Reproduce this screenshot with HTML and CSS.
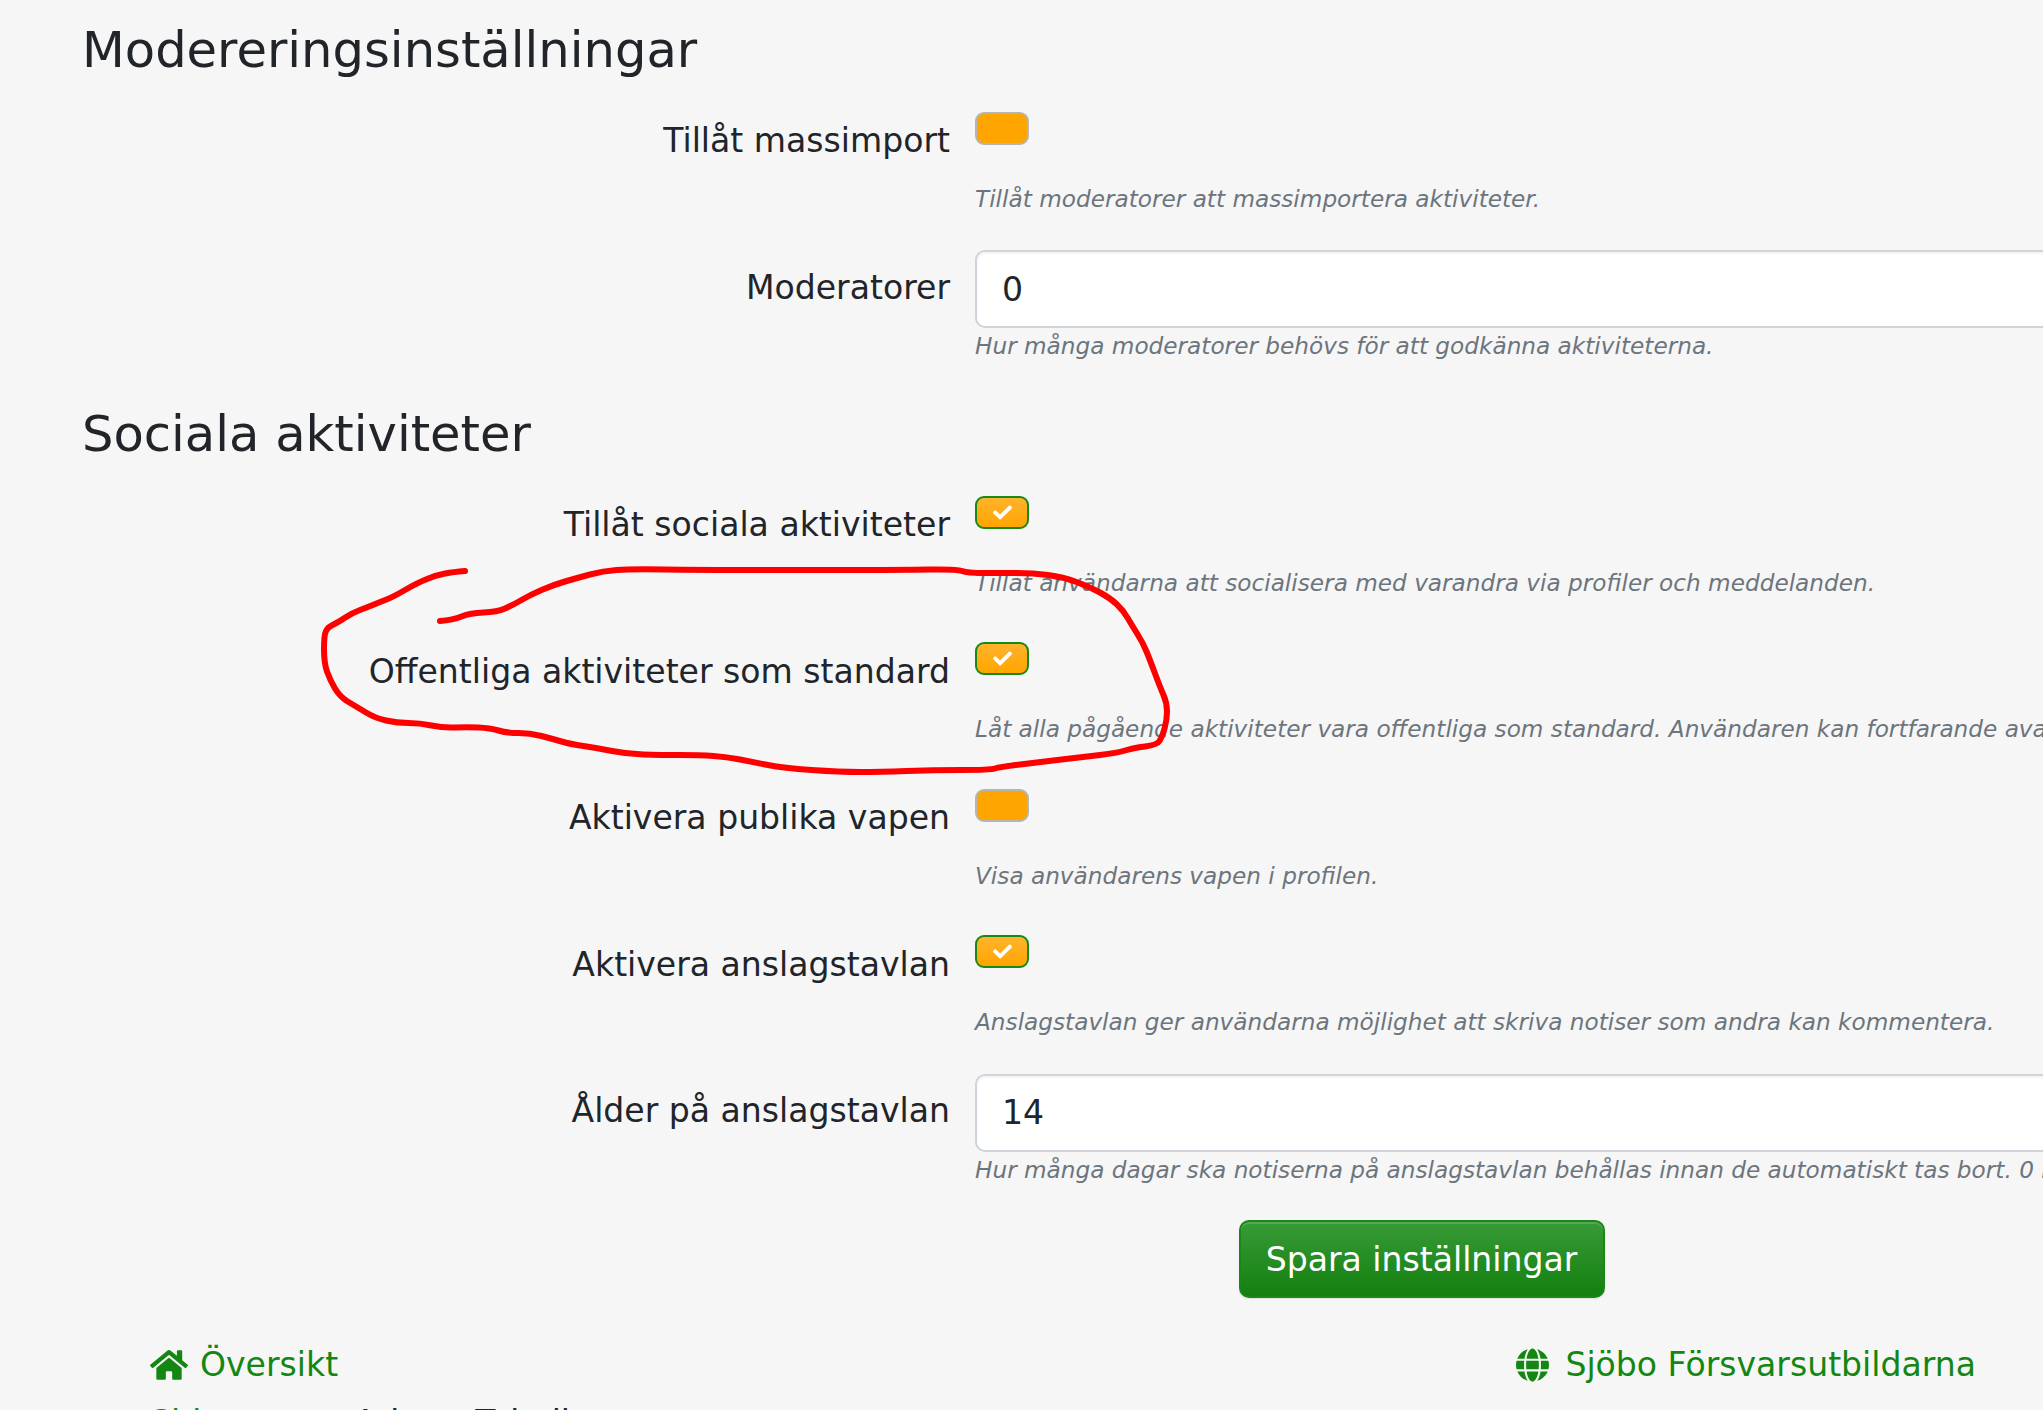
FILE: index.html
```html
<!DOCTYPE html>
<html lang="sv">
<head>
  <meta charset="UTF-8" />
  <title>Modereringsinställningar</title>
  <link rel="stylesheet" href="styles.css">
</head>
<body>
  <div class="page">
    <h2 class="section-title">Modereringsinställningar</h2>

    <div class="setting">
      <label class="setting-label">Tillåt massimport</label>
      <div class="setting-control">
        <span class="toggle"></span>
        <small class="help">Tillåt moderatorer att massimportera aktiviteter.</small>
      </div>
    </div>

    <div class="setting">
      <label class="setting-label">Moderatorer</label>
      <div class="setting-control">
        <input class="text-input" type="text" value="0">
        <small class="help">Hur många moderatorer behövs för att godkänna aktiviteterna.</small>
      </div>
    </div>

    <h2 class="section-title section-title-next">Sociala aktiviteter</h2>

    <div class="setting">
      <label class="setting-label">Tillåt sociala aktiviteter</label>
      <div class="setting-control">
        <span class="toggle on">
          <svg class="check" viewBox="0 0 512 512"><path d="M173.898 439.404l-166.4-166.4c-9.997-9.997-9.997-26.206 0-36.204l36.203-36.204c9.997-9.998 26.207-9.998 36.204 0L192 312.69 432.095 72.596c9.997-9.997 26.207-9.997 36.204 0l36.203 36.204c9.997 9.997 9.997 26.206 0 36.204l-294.4 294.401c-9.998 9.997-26.207 9.997-36.204-.001z"/></svg>
        </span>
        <small class="help">Tillåt användarna att socialisera med varandra via profiler och meddelanden.</small>
      </div>
    </div>

    <div class="setting">
      <label class="setting-label">Offentliga aktiviteter som standard</label>
      <div class="setting-control">
        <span class="toggle on">
          <svg class="check" viewBox="0 0 512 512"><path d="M173.898 439.404l-166.4-166.4c-9.997-9.997-9.997-26.206 0-36.204l36.203-36.204c9.997-9.998 26.207-9.998 36.204 0L192 312.69 432.095 72.596c9.997-9.997 26.207-9.997 36.204 0l36.203 36.204c9.997 9.997 9.997 26.206 0 36.204l-294.4 294.401c-9.998 9.997-26.207 9.997-36.204-.001z"/></svg>
        </span>
        <small class="help">Låt alla pågående aktiviteter vara offentliga som standard. Användaren kan fortfarande avaktivera detta.</small>
      </div>
    </div>

    <div class="setting">
      <label class="setting-label">Aktivera publika vapen</label>
      <div class="setting-control">
        <span class="toggle"></span>
        <small class="help">Visa användarens vapen i profilen.</small>
      </div>
    </div>

    <div class="setting">
      <label class="setting-label">Aktivera anslagstavlan</label>
      <div class="setting-control">
        <span class="toggle on">
          <svg class="check" viewBox="0 0 512 512"><path d="M173.898 439.404l-166.4-166.4c-9.997-9.997-9.997-26.206 0-36.204l36.203-36.204c9.997-9.998 26.207-9.998 36.204 0L192 312.69 432.095 72.596c9.997-9.997 26.207-9.997 36.204 0l36.203 36.204c9.997 9.997 9.997 26.206 0 36.204l-294.4 294.401c-9.998 9.997-26.207 9.997-36.204-.001z"/></svg>
        </span>
        <small class="help">Anslagstavlan ger användarna möjlighet att skriva notiser som andra kan kommentera.</small>
      </div>
    </div>

    <div class="setting">
      <label class="setting-label">Ålder på anslagstavlan</label>
      <div class="setting-control">
        <input class="text-input" type="text" value="14">
        <small class="help">Hur många dagar ska notiserna på anslagstavlan behållas innan de automatiskt tas bort. 0 innebär aldrig.</small>
      </div>
    </div>

    <div class="form-actions">
      <button class="save-btn">Spara inställningar</button>
    </div>

    <div class="footer-links">
      <a class="footer-link">
        <svg class="home-icon" viewBox="0 0 576 512"><path d="M280.37 148.26L96 300.11V464a16 16 0 0 0 16 16l112.06-.29a16 16 0 0 0 15.92-16V368a16 16 0 0 1 16-16h64a16 16 0 0 1 16 16v95.64a16 16 0 0 0 16 16.05L464 480a16 16 0 0 0 16-16V300L295.67 148.26a12.19 12.19 0 0 0-15.3 0zM571.6 251.47L488 182.56V44.05a12 12 0 0 0-12-12h-56a12 12 0 0 0-12 12v72.61L318.47 43a48 48 0 0 0-61 0L4.34 251.47a12 12 0 0 0-1.6 16.9l25.5 31A12 12 0 0 0 45.15 301l235.22-193.74a12.19 12.19 0 0 1 15.3 0L530.9 301a12 12 0 0 0 16.9-1.6l25.5-31a12 12 0 0 0-1.7-16.93z"/></svg>
        Översikt
      </a>
      <a class="footer-link">
        <svg class="globe-icon" viewBox="0 0 496 512"><path d="M336.5 160C322 70.7 287.8 8 248 8s-74 62.7-88.5 152h177zM152 256c0 22.2 1.2 43.5 3.3 64h185.3c2.1-20.5 3.3-41.8 3.3-64s-1.2-43.5-3.3-64H155.3c-2.1 20.5-3.3 41.8-3.3 64zm324.7-96c-28.6-67.9-86.5-120.4-158-141.6 24.4 33.8 41.2 84.7 50 141.6h108zM177.2 18.4C105.8 39.6 47.8 92.1 19.3 160h108c8.7-56.9 25.5-107.8 49.9-141.6zM487.4 192H372.7c2.1 21 3.3 42.5 3.3 64s-1.2 43-3.3 64h114.6c5.5-20.5 8.6-41.8 8.6-64s-3.1-43.5-8.5-64zM120 256c0-21.5 1.2-43 3.3-64H8.6C3.2 212.5 0 233.8 0 256s3.2 43.5 8.6 64h114.6c-2-21-3.2-42.5-3.2-64zm39.5 96c14.5 89.3 48.7 152 88.5 152s74-62.7 88.5-152h-177zm159.3 141.6c71.4-21.2 129.4-73.7 158-141.6h-108c-8.8 56.9-25.6 107.8-50 141.6zM19.3 352c28.6 67.9 86.5 120.4 158 141.6-24.4-33.8-41.2-84.7-50-141.6h-108z"/></svg>
        Sjöbo Försvarsutbildarna
      </a>
    </div>

    <div class="footer-next">
      <a class="footer-next-link">Sidor</a>
      <span>Arbeta Tabell</span>
    </div>
  </div>

  <!-- hand drawn red marking on top of the screenshot -->
  <svg class="scribble" viewBox="0 0 2043 1410">
    <path d="M465 571 Q453 572 445 573.5 Q437 575 427 579 Q417 583 405 590 Q393 597 386.5 599.5 Q380 602 374 604.5 Q368 607 360 610 Q352 613 344.5 618 Q337 623 332.5 625 Q328 627 326 631 Q324 635 324 649 Q324 663 327 671.5 Q330 680 335 688.5 Q340 697 348.5 702 Q357 707 366 712.5 Q375 718 386 720.5 Q397 723 408.5 723 Q420 723 431.5 725.5 Q443 728 455 727.5 Q467 727 478.5 727.5 Q490 728 498.5 730.5 Q507 733 518.5 733 Q530 733 541.5 736 Q553 739 561.5 741.5 Q570 744 583.5 746 Q597 748 612 751 Q627 754 643.5 754.5 Q660 755 680 755 Q700 755 713.5 756 Q727 757 740 759.5 Q753 762 768 765 Q783 768 811.5 770 Q840 772 860 772 Q880 772 906.5 771 Q933 770 961.5 770 Q990 770 995 768.5 Q1000 767 1020 764.5 Q1040 762 1061.5 759.5 Q1083 757 1100 755 Q1117 753 1125 750.5 Q1133 748 1145 746.5 Q1157 745 1159.5 741 Q1162 737 1164.5 728.5 Q1167 720 1167 711.5 Q1167 703 1163.5 695 Q1160 687 1155 673.5 Q1150 660 1146.5 651.5 Q1143 643 1138 635 Q1133 627 1128 618.5 Q1123 610 1116.5 604 Q1110 598 1100 592.5 Q1090 587 1076.5 582 Q1063 577 1048 575 Q1033 573 1016.5 573 Q1000 573 983.5 573 Q967 573 962 571 Q957 569 928.5 569.5 Q900 570 800 570 Q700 570 665 569.5 Q630 569 616.5 570 Q603 571 590 574.5 Q577 578 565 581.5 Q553 585 541.5 590 Q530 595 521.5 600 Q513 605 505 608.5 Q497 612 483.5 612.5 Q470 613 461.5 616.5 Q453 620 440 621"/>
  </svg>
</body>
</html>
```

FILE: styles.css
```css
* {
  box-sizing: border-box;
}

html, body {
  height: 1410px;
  overflow: hidden;
}

body {
  margin: 0;
  position: relative;
  font-family: "DejaVu Sans", sans-serif;
  background-color: #f6f6f6;
  color: #212529;
}

.page {
  padding-top: 20px;
}

.section-title {
  margin: 0 0 23.5px 82px;
  font-size: 49.6px;
  font-weight: 400;
  line-height: 60px;
}

.section-title-next {
  margin-top: 40px;
}

.setting {
  display: grid;
  grid-template-columns: 950px 1fr;
  column-gap: 25px;
  margin-bottom: 32.5px;
}

.setting-label {
  padding-top: 12.5px;
  font-size: 33.1px;
  line-height: 50px;
  text-align: right;
}

.setting-control {
  display: flex;
  flex-direction: column;
  align-items: flex-start;
  min-width: 0;
  min-height: 114px;
}

.toggle {
  display: flex;
  align-items: center;
  justify-content: center;
  width: 54px;
  height: 33px;
  margin: 8px 0 36px;
  border: 2px solid #b5b5b5;
  border-radius: 9px;
  background: #ffa500;
}

.toggle.on {
  border-color: #188818;
  background: linear-gradient(#ffb32c, #ffa500);
}

.check {
  width: 19px;
  height: 19px;
  fill: #fff;
}

.text-input {
  width: 1300px;
  height: 78px;
  padding: 0 25px;
  border: 2px solid #ced4da;
  border-radius: 10px;
  background: #fff;
  box-shadow: inset 0 2px 3px rgba(0, 0, 0, 0.05);
  color: #212529;
  font-family: inherit;
  font-size: 33.1px;
  outline: none;
}

.help {
  color: #6c757d;
  font-size: 23.2px;
  font-style: italic;
  line-height: 36px;
  white-space: nowrap;
}

.form-actions {
  display: flex;
  justify-content: center;
  padding-left: 800px;
}

.save-btn {
  width: 366px;
  height: 78px;
  padding: 0;
  border: 2px solid #188818;
  border-radius: 10px;
  background: linear-gradient(#379a37, #14800f);
  box-shadow: inset 0 2px 0 rgba(255, 255, 255, 0.15), 0 1px 2px rgba(0, 0, 0, 0.1);
  color: #fff;
  font-family: inherit;
  font-size: 33.1px;
}

.footer-links {
  display: flex;
  justify-content: space-between;
  margin-top: 42px;
  padding: 0 67px 0 150px;
  font-size: 33.1px;
  line-height: 50px;
}

.footer-link {
  display: flex;
  align-items: center;
  gap: 12px;
  color: #148612;
}

.home-icon {
  width: 38px;
  height: 34px;
  fill: #148612;
}

.globe-icon {
  width: 33px;
  height: 34px;
  margin-right: 4px;
  fill: #148612;
}

.footer-next {
  display: flex;
  margin-top: 8px;
  padding-left: 150px;
  font-size: 33.1px;
  line-height: 50px;
}

.footer-next-link {
  width: 204px;
  color: #148612;
}

.scribble {
  position: absolute;
  top: 0;
  left: 0;
  width: 2043px;
  height: 1410px;
  pointer-events: none;
  fill: none;
  stroke: #f00;
  stroke-width: 6px;
  stroke-linecap: round;
  stroke-linejoin: round;
}
```
